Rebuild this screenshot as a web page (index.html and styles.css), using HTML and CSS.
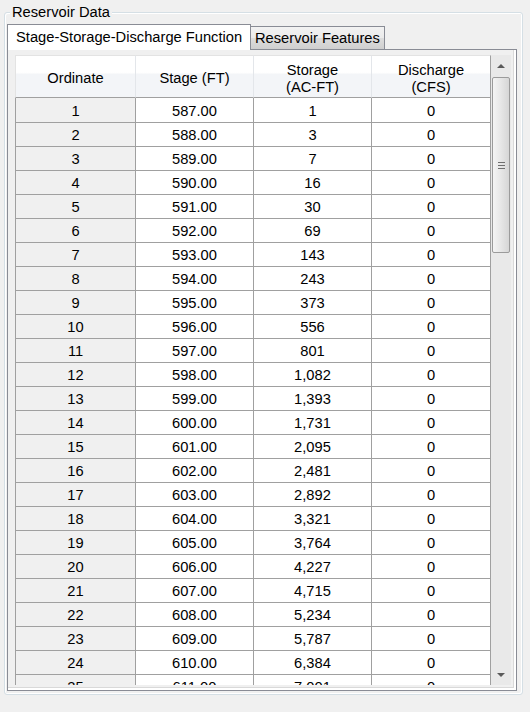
FILE: index.html
```html
<!DOCTYPE html>
<html>
<head>
<meta charset="utf-8">
<title>Reservoir Data</title>
<link rel="stylesheet" href="styles.css">
</head>
<body>
<div class="group">
  <div class="legend">Reservoir Data</div>
  <div class="tabs">
    <div class="tab tab-active">Stage-Storage-Discharge Function</div>
    <div class="tab tab-idle">Reservoir Features</div>
  </div>
  <div class="panel">
    <div class="grid">
      <div class="grid-body">
        <table class="sheet">
          <thead>
            <tr>
              <th class="c-ord">Ordinate</th>
              <th class="c-stage">Stage (FT)</th>
              <th class="c-stor">Storage<br>(AC-FT)</th>
              <th class="c-dis">Discharge<br>(CFS)</th>
            </tr>
          </thead>
          <tbody>
            <tr><td class="ord">1</td><td>587.00</td><td>1</td><td>0</td></tr>
            <tr><td class="ord">2</td><td>588.00</td><td>3</td><td>0</td></tr>
            <tr><td class="ord">3</td><td>589.00</td><td>7</td><td>0</td></tr>
            <tr><td class="ord">4</td><td>590.00</td><td>16</td><td>0</td></tr>
            <tr><td class="ord">5</td><td>591.00</td><td>30</td><td>0</td></tr>
            <tr><td class="ord">6</td><td>592.00</td><td>69</td><td>0</td></tr>
            <tr><td class="ord">7</td><td>593.00</td><td>143</td><td>0</td></tr>
            <tr><td class="ord">8</td><td>594.00</td><td>243</td><td>0</td></tr>
            <tr><td class="ord">9</td><td>595.00</td><td>373</td><td>0</td></tr>
            <tr><td class="ord">10</td><td>596.00</td><td>556</td><td>0</td></tr>
            <tr><td class="ord">11</td><td>597.00</td><td>801</td><td>0</td></tr>
            <tr><td class="ord">12</td><td>598.00</td><td>1,082</td><td>0</td></tr>
            <tr><td class="ord">13</td><td>599.00</td><td>1,393</td><td>0</td></tr>
            <tr><td class="ord">14</td><td>600.00</td><td>1,731</td><td>0</td></tr>
            <tr><td class="ord">15</td><td>601.00</td><td>2,095</td><td>0</td></tr>
            <tr><td class="ord">16</td><td>602.00</td><td>2,481</td><td>0</td></tr>
            <tr><td class="ord">17</td><td>603.00</td><td>2,892</td><td>0</td></tr>
            <tr><td class="ord">18</td><td>604.00</td><td>3,321</td><td>0</td></tr>
            <tr><td class="ord">19</td><td>605.00</td><td>3,764</td><td>0</td></tr>
            <tr><td class="ord">20</td><td>606.00</td><td>4,227</td><td>0</td></tr>
            <tr><td class="ord">21</td><td>607.00</td><td>4,715</td><td>0</td></tr>
            <tr><td class="ord">22</td><td>608.00</td><td>5,234</td><td>0</td></tr>
            <tr><td class="ord">23</td><td>609.00</td><td>5,787</td><td>0</td></tr>
            <tr><td class="ord">24</td><td>610.00</td><td>6,384</td><td>0</td></tr>
            <tr><td class="ord">25</td><td>611.00</td><td>7,001</td><td>0</td></tr>
          </tbody>
        </table>
      </div>
      <div class="vscroll">
        <div class="vs-btn"><span class="arrow-up"></span></div>
        <div class="vs-thumb">
          <span class="grip"></span>
          <span class="grip"></span>
          <span class="grip"></span>
        </div>
        <div class="vs-track"></div>
        <div class="vs-btn"><span class="arrow-down"></span></div>
      </div>
    </div>
  </div>
</div>
</body>
</html>
```
FILE: styles.css
```css
html, body {
  margin: 0;
  padding: 0;
}

body {
  width: 530px;
  height: 712px;
  overflow: hidden;
  background: #f0f0f0;
  color: #000;
  font-family: "Liberation Sans", Arial, sans-serif;
  font-size: 14.7px;
}

/* group box frame */
.group {
  box-sizing: border-box;
  width: 519px;
  height: 683px;
  margin: 12px 0 0 4px;
  border: 1px solid #d5dfe5;
  border-radius: 3px;
  box-shadow: inset 1px 1px 0 #fff, inset -1px -1px 0 #fff;
  display: flex;
  flex-direction: column;
}

.legend {
  align-self: flex-start;
  height: 16px;
  line-height: 16px;
  margin: -9px 0 0 5px;
  padding: 0 2px;
  background: #f0f0f0;
}

/* tab strip */
.tabs {
  display: flex;
  align-items: flex-end;
  height: 25px;
  margin: 4px 0 0 2px;
}

.tab {
  box-sizing: border-box;
  border: 1px solid #898c95;
  border-bottom: none;
  white-space: nowrap;
}

.tab-active {
  position: relative;
  z-index: 1;
  width: 244px;
  height: 26px;
  margin-bottom: -1px;
  padding-left: 8px;
  line-height: 25px;
  background: #fff;
}

.tab-idle {
  width: 134px;
  height: 23px;
  border-left: none;
  padding-left: 4px;
  line-height: 23px;
  background: linear-gradient(#f2f2f2 0%, #ebebeb 50%, #dddddd 51%, #cfcfcf 100%);
}

/* tab page */
.panel {
  box-sizing: border-box;
  width: 510px;
  height: 642px;
  margin-left: 2px;
  padding: 5px 0 0 7px;
  border: 1px solid #898c95;
  background: #f0f0f0;
  box-shadow: inset -2px -2px 0 #fff, inset -3px -3px 0 #d9d9d9;
}

/* data grid */
.grid {
  display: flex;
  width: 496px;
  height: 630px;
  overflow: hidden;
}

.grid-body {
  width: 476px;
  overflow: hidden;
}

.sheet {
  width: 476px;
  table-layout: fixed;
  border-collapse: separate;
  border-spacing: 0;
}

.sheet th,
.sheet td {
  box-sizing: border-box;
  padding: 0;
  text-align: center;
  font-weight: normal;
  white-space: nowrap;
}

.sheet th {
  height: 43px;
  padding-top: 4px;
  line-height: 17px;
  vertical-align: middle;
  border-top: 1px solid #e3e3e3;
  border-right: 1px solid #e3e6ea;
  border-bottom: 1px solid #a0a0a0;
  background: linear-gradient(#ffffff 0%, #ffffff 40%, #f3f5f8 45%, #f3f5f8 100%);
}

.sheet th.c-ord { width: 121px; border-left: 1px solid #e3e3e3; }
.sheet th.c-stage { width: 118px; }
.sheet th.c-stor { width: 118px; }
.sheet th.c-dis { width: 119px; border-right-color: #a0a0a0; }

.sheet td {
  height: 24px;
  padding-top: 2px;
  line-height: 21px;
  border-right: 1px solid #a0a0a0;
  border-bottom: 1px solid #a0a0a0;
  background: #fff;
}

.sheet tbody tr:first-child td {
  height: 25px;
  padding-top: 3px;
}

.sheet td.ord {
  border-left: 1px solid #a0a0a0;
  background: #f0f0f0;
}

/* vertical scroll bar */
.vscroll {
  width: 20px;
  display: flex;
  flex-direction: column;
  background: #e9e9e9;
}

.vs-btn {
  height: 21px;
  display: flex;
  align-items: center;
  justify-content: center;
}

.arrow-up,
.arrow-down {
  width: 0;
  height: 0;
  border-left: 4px solid transparent;
  border-right: 4px solid transparent;
}

.arrow-up { border-bottom: 4px solid #5a5a5a; }
.arrow-down { border-top: 4px solid #5a5a5a; }

.vs-thumb {
  box-sizing: border-box;
  height: 176px;
  margin: 1px 1px 0 1px;
  border: 1px solid #9b9b9b;
  border-radius: 2px;
  background: linear-gradient(90deg, #f4f4f4 0%, #e8e8e8 45%, #d6d6d6 100%);
  display: flex;
  flex-direction: column;
  align-items: center;
  justify-content: center;
  gap: 2px;
}

.grip {
  width: 7px;
  height: 1px;
  background: #6f6f6f;
}

.vs-track {
  flex: 1;
}
```
